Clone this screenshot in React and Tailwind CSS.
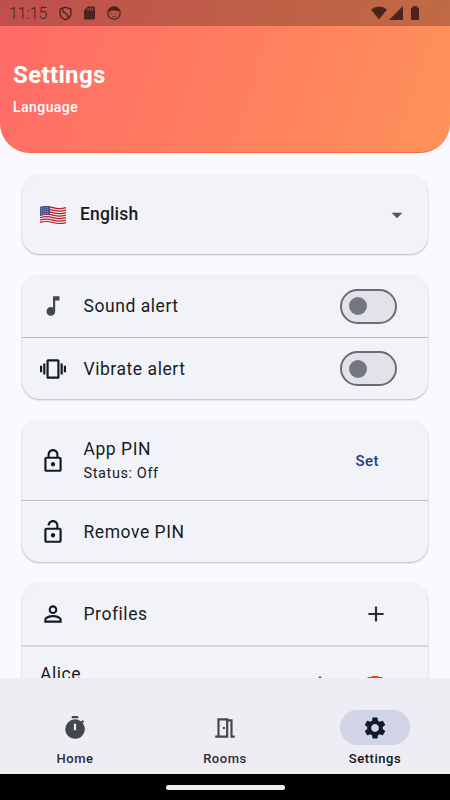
import {
  MdAdd,
  MdArrowDropDown,
  MdLockOpen,
  MdLockOutline,
  MdMusicNote,
  MdOutlineMeetingRoom,
  MdPersonOutline,
  MdSettings,
  MdTimer,
  MdVibration,
} from "react-icons/md";

function StatusBar() {
  return (
    <div className="flex h-[26px] items-center bg-black/25 pl-[9px] pr-[31px] text-[#4b241f]">
      <span className="w-[50px] pt-px text-[16px] font-[350] leading-[26px] tracking-[-0.1px]">11:15</span>
      <svg className="h-[15px] w-[13px]" viewBox="0 0 14 16" fill="none" stroke="currentColor" strokeWidth="1.5">
        <path d="M7 1.2 1.2 3.2v4.600c0 3 2.300 5.600 5.800 7 3.500-1.400 5.800-4 5.800-7V3.200z" />
        <path d="M4 2.600c-.5 3.200.8 4.200 3 5.300s3 2.600 2.300 5.600" strokeWidth="1.400" />
      </svg>
      <svg className="ml-[12px] h-[14px] w-[11px]" viewBox="0 0 12 14">
        <path fill="currentColor" d="M4.200 0H10.500A1.300 1.300 0 0 1 12 1.300V12.500A1.400 1.400 0 0 1 10.600 14H1.400A1.400 1.400 0 0 1 0 12.500V4.200z" />
        <path stroke="#bf574a" d="M4.500 1.500v3M7 1.500v3M9.500 1.500v3" />
      </svg>
      <svg className="ml-[12px] h-[14px] w-[14px]" viewBox="0 0 14 14">
        <circle cx="7" cy="7" r="6.200" fill="none" stroke="currentColor" strokeWidth="1.300" />
        <path fill="currentColor" d="M1 6.200C1.500 2.500 4 .8 7 .8s5.500 1.700 6 5.400l-1.600-1.400-2 .5-1-.8H4.200L3 5.800z" />
        <circle cx="4.800" cy="7.600" r=".7" fill="currentColor" />
        <circle cx="9.200" cy="7.600" r=".7" fill="currentColor" />
        <path d="M5 10.200q2 1 4 0" fill="none" stroke="currentColor" strokeWidth=".7" />
      </svg>
      <svg className="ml-auto h-[14px] w-[16px]" viewBox="0 0 17 14" fill="currentColor">
        <path d="M0 3.200Q8.500-3.200 17 3.200L8.500 14z" />
      </svg>
      <svg className="ml-[2px] h-[14px] w-[14px]" viewBox="0 0 14 14" fill="currentColor">
        <path d="M14 0v14H0z" />
      </svg>
      <svg className="ml-[8px] h-[14px] w-[8px]" viewBox="0 0 8 14" fill="currentColor">
        <path d="M2 0h4v1.500h1.500L8 2v12H0V2l.5-.5H2z" />
      </svg>
    </div>
  );
}

function Flag() {
  const wave = "q6.500-2 13 0t13 0";
  return (
    <svg className="h-[20px] w-[26px]" viewBox="0 0 26 20">
      <path d="M0 2q6.500-2 13 0t13 0v16q-6.500 2-13 0t-13 0z" fill="#f3eeee" />
      {[2.600, 5.100, 7.600, 10.100, 12.600, 15.100, 17.500].map((y) => (
        <path key={y} d={`M0 ${y}${wave}`} fill="none" stroke="#b5202c" strokeWidth="1.200" />
      ))}
      <path d="M0 2q5-1.600 10-.7v9q-5-.9-10 .7z" fill="#4c4f8f" />
      <path d="M1 3.500q4-1.300 8-.6M1 5.500q4-1.300 8-.6M1 7.500q4-1.300 8-.6M1 9.500q4-1.300 8-.6" fill="none" stroke="#b9bbdc" strokeWidth=".7" strokeDasharray="1 1" />
    </svg>
  );
}

function Card({ className = "", children }) {
  return (
    <section className={`shrink-0 overflow-hidden rounded-[18px] bg-[#f2f3f9] shadow-[0_1px_2px_rgba(0,0,0,0.28)] ${className}`}>
      {children}
    </section>
  );
}

function Row({ icon: Icon, iconClass = "text-[#151827]", title, subtitle, className, children }) {
  return (
    <div className={`flex items-center pl-[17.500px] ${className}`}>
      <Icon className={`size-[26px] shrink-0 ${iconClass}`} />
      <div className="ml-[18px] flex-1">
        <div className="text-[17.500px] leading-[26px] tracking-[0.550px]">{title}</div>
        {subtitle && <div className="text-[14.500px] leading-[24px] tracking-[0.600px]">{subtitle}</div>}
      </div>
      {children}
    </div>
  );
}

function Toggle() {
  return (
    <button className="mr-[31px] flex h-[35px] w-[57px] items-center rounded-full border-2 border-[#6c6b75] bg-[#e2e3e8] pl-[7px]">
      <span className="size-[18px] rounded-full bg-[#74777f]" />
    </button>
  );
}

function NavItem({ icon: Icon, label, active }) {
  return (
    <button className="flex w-[150px] flex-col items-center pt-[32px]">
      <span className={`flex h-[35px] w-[70px] items-center justify-center rounded-full ${active ? "bg-[#d0d4e4] text-[#111b2c]" : "text-[#44474f]"}`}>
        <Icon className="size-[26px]" />
      </span>
      <span className={`mt-[5px] text-[13px] font-[480] leading-[18px] tracking-[0.550px] ${active ? "text-[#111318]" : "text-[#2b2d38]"}`}>{label}</span>
    </button>
  );
}

export default function App() {
  return (
    <div className="flex h-[800px] w-[450px] flex-col overflow-hidden bg-[#faf9ff] font-[Roboto,sans-serif] text-[#191b22]">
      <header className="h-[153px] shrink-0 overflow-hidden rounded-b-[30px] border-b border-[#ff6b35] bg-[linear-gradient(108deg,#ff6a67_0%,#ff925a_100%)] text-white">
        <StatusBar />
        <h1 className="mt-[34px] pl-[13px] text-[24px] font-bold leading-[30px] tracking-[0.350px]">Settings</h1>
        <p className="mt-[7px] pl-[13px] text-[14px] font-[490] leading-[20px] tracking-[0.450px]">Language</p>
      </header>

      <main className="flex min-h-0 flex-1 flex-col overflow-hidden px-[22px] pt-[22px]">
        <Card className="flex h-[79px] items-center pl-[18px] pr-[18px]">
          <Flag />
          <span className="ml-[14px] text-[17.500px] font-[490] tracking-[0.150px]">English</span>
          <MdArrowDropDown className="ml-auto size-[26px] text-[#55565a]" />
        </Card>

        <Card className="mt-[21px] h-[124px]">
          <Row icon={MdMusicNote} iconClass="text-[#44474f]" title="Sound alert" className="h-[62px]"><Toggle /></Row>
          <div className="h-px bg-[#bbbdc6]" />
          <Row icon={MdVibration} title="Vibrate alert" className="h-[61px]"><Toggle /></Row>
        </Card>

        <Card className="mt-[21px] h-[142px]">
          <Row icon={MdLockOutline} title="App PIN" subtitle="Status: Off" className="h-[80px] pt-[2px]">
            <button className="mr-[49px] text-[15px] font-[470] tracking-[0.450px] text-[#233b8c]">Set</button>
          </Row>
          <div className="h-px bg-[#bbbdc6]" />
          <Row icon={MdLockOpen} title="Remove PIN" className="h-[61px]" />
        </Card>

        <Card className="mt-[21px] h-[150px]">
          <Row icon={MdPersonOutline} title="Profiles" className="h-[62px]">
            <MdAdd className="mr-[39.500px] size-[26px] text-[#292c36]" />
          </Row>
          <div className="h-[2px] bg-[#d6d7de]" />
          <div className="flex items-start pl-[18px] pr-[40px] pt-[14px]">
            <span className="flex-1 text-[17.500px] leading-[26px] tracking-[0.550px]">Alice</span>
            <svg className="mr-[29px] mt-[14px] size-[26px]" viewBox="0 0 26 26">
              <path d="M13 1 17 6H9z" fill="#44474f" />
            </svg>
            <svg className="mt-[14px] size-[26px]" viewBox="0 0 26 26" fill="#ff3b20">
              <path d="M10 1h6l1 1h3.500v2.500h-15V2H9zM6 6h14v18H6z" />
            </svg>
          </div>
        </Card>
      </main>

      <nav className="flex h-[96px] shrink-0 bg-[#eeedf3]">
        <NavItem icon={MdTimer} label="Home" />
        <NavItem icon={MdOutlineMeetingRoom} label="Rooms" />
        <NavItem icon={MdSettings} label="Settings" active />
      </nav>
      <div className="flex h-[26px] shrink-0 items-center justify-center bg-black">
        <div className="h-[5px] w-[119px] rounded-full bg-[#eeeeee]" />
      </div>
    </div>
  );
}
